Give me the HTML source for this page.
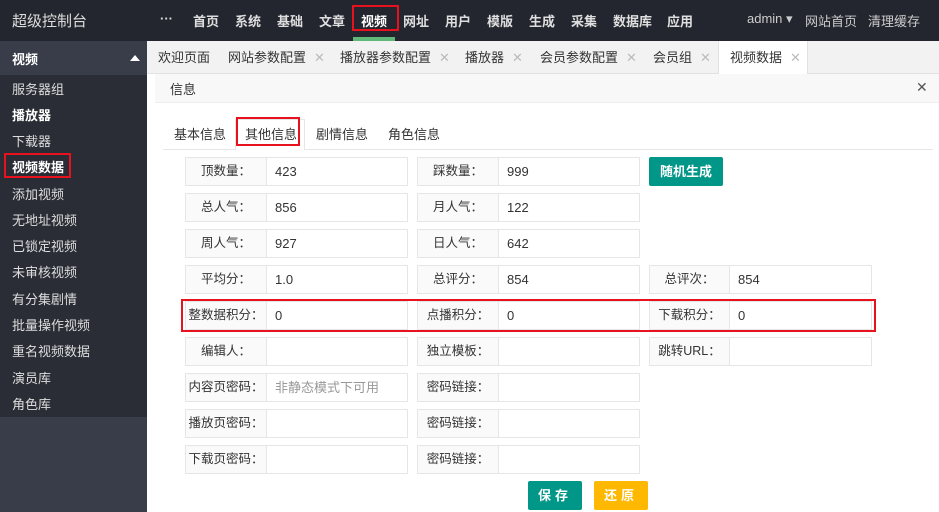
<!DOCTYPE html><html><head><meta charset="utf-8"><style>
*{margin:0;padding:0;box-sizing:border-box}
body{width:939px;height:512px;overflow:hidden;position:relative;background:#fff;font-family:"Liberation Sans","Noto Sans CJK SC",sans-serif;font-size:13px;color:#333}
.a{position:absolute;white-space:nowrap}
.top{left:0;top:0;width:939px;height:41px;background:#23262e}
.nav{top:11px;color:#fff;font-size:13px;font-weight:bold;opacity:.85}
.side{left:0;top:41px;width:147px;height:471px;background:#2a2d36}
.si{left:12px;color:#ddd;font-size:13px}
.lb{background:#fafafa;border:1px solid #e6e6e6;text-align:center;line-height:27px;height:29px;color:#333;font-size:12.5px}
.in{background:#fff;border:1px solid #e6e6e6;border-left:none;height:29px;line-height:27px;padding-left:8px;color:#333}
.red{border:2px solid #e8121e}
.tab{top:47px;color:#333}
.x{color:#bbb;margin-left:8px}
.btn{color:#fff;text-align:center;font-weight:bold;line-height:29px;height:29px;border-radius:2px}
</style></head><body>
<div class="a top"></div>
<div class="a" style="left:12px;top:10px;color:#ddd;font-size:15px">超级控制台</div>
<div class="a nav" style="left:160px">···</div>
<div class="a nav" style="left:193px">首页</div>
<div class="a nav" style="left:235px">系统</div>
<div class="a nav" style="left:277px">基础</div>
<div class="a nav" style="left:319px">文章</div>
<div class="a nav" style="left:361px;opacity:1">视频</div>
<div class="a red" style="left:352px;top:5px;width:47px;height:26px"></div>
<div class="a" style="left:353px;top:37px;width:42px;height:4px;background:#5fb878"></div>
<div class="a nav" style="left:403px">网址</div>
<div class="a nav" style="left:445px">用户</div>
<div class="a nav" style="left:487px">模版</div>
<div class="a nav" style="left:529px">生成</div>
<div class="a nav" style="left:571px">采集</div>
<div class="a nav" style="left:613px">数据库</div>
<div class="a nav" style="left:667px">应用</div>
<div class="a" style="left:747px;top:11px;color:#ccc">admin ▾</div>
<div class="a" style="left:805px;top:11px;color:#ccc">网站首页</div>
<div class="a" style="left:868px;top:11px;color:#ccc">清理缓存</div>

<div class="a side"></div>
<div class="a" style="left:0;top:41px;width:147px;height:34px;background:#393d49"></div>
<div class="a" style="left:12px;top:49px;color:#fff;font-weight:bold">视频</div>
<div class="a" style="left:130px;top:55px;width:0;height:0;border-left:5px solid transparent;border-right:5px solid transparent;border-bottom:6px solid #fff"></div>
<div class="a si" style="top:79px">服务器组</div>
<div class="a si" style="top:105px;color:#fff;font-weight:bold">播放器</div>
<div class="a si" style="top:131px">下载器</div>
<div class="a si" style="top:157px;color:#fff;font-weight:bold">视频数据</div>
<div class="a red" style="left:4px;top:153px;width:67px;height:25px"></div>
<div class="a si" style="top:184px">添加视频</div>
<div class="a si" style="top:210px">无地址视频</div>
<div class="a si" style="top:236px">已锁定视频</div>
<div class="a si" style="top:262px">未审核视频</div>
<div class="a si" style="top:289px">有分集剧情</div>
<div class="a si" style="top:315px">批量操作视频</div>
<div class="a si" style="top:341px">重名视频数据</div>
<div class="a si" style="top:368px">演员库</div>
<div class="a si" style="top:394px">角色库</div>
<div class="a" style="left:0;top:417px;width:147px;height:95px;background:#393d49"></div>

<div class="a" style="left:147px;top:41px;width:792px;height:33px;background:#f2f2f2;border-bottom:1px solid #e2e2e2"></div>
<div class="a" style="left:718px;top:41px;width:90px;height:33px;background:#fff;border-left:1px solid #e2e2e2;border-right:1px solid #e2e2e2"></div>
<div class="a tab" style="left:158px">欢迎页面</div>
<div class="a tab" style="left:228px">网站参数配置<span class="x">✕</span></div>
<div class="a tab" style="left:340px">播放器参数配置<span class="x">✕</span></div>
<div class="a tab" style="left:465px">播放器<span class="x">✕</span></div>
<div class="a tab" style="left:540px">会员参数配置<span class="x">✕</span></div>
<div class="a tab" style="left:653px">会员组<span class="x">✕</span></div>
<div class="a tab" style="left:730px">视频数据<span class="x">✕</span></div>

<div class="a" style="left:155px;top:74px;width:784px;height:29px;background:#f8f8f8;border-bottom:1px solid #eee"></div>
<div class="a" style="left:170px;top:79px">信息</div>
<div class="a" style="left:916px;top:79px;color:#555;font-size:14px">✕</div>

<div class="a" style="left:163px;top:149px;width:770px;height:1px;background:#e6e6e6"></div>
<div class="a" style="left:235px;top:119px;width:70px;height:31px;background:#fff;border:1px solid #e6e6e6;border-bottom:none"></div>
<div class="a" style="left:174px;top:124px">基本信息</div>
<div class="a" style="left:245px;top:124px">其他信息</div>
<div class="a" style="left:316px;top:124px">剧情信息</div>
<div class="a" style="left:388px;top:124px">角色信息</div>
<div class="a red" style="left:236px;top:117px;width:64px;height:29px"></div>

<div class="a lb" style="left:185px;top:157px;width:82px">顶数量：</div><div class="a in" style="left:267px;top:157px;width:141px">423</div>
<div class="a lb" style="left:417px;top:157px;width:82px">踩数量：</div><div class="a in" style="left:499px;top:157px;width:141px">999</div>
<div class="a btn" style="left:649px;top:157px;width:74px;background:#009688">随机生成</div>

<div class="a lb" style="left:185px;top:193px;width:82px">总人气：</div><div class="a in" style="left:267px;top:193px;width:141px">856</div>
<div class="a lb" style="left:417px;top:193px;width:82px">月人气：</div><div class="a in" style="left:499px;top:193px;width:141px">122</div>

<div class="a lb" style="left:185px;top:229px;width:82px">周人气：</div><div class="a in" style="left:267px;top:229px;width:141px">927</div>
<div class="a lb" style="left:417px;top:229px;width:82px">日人气：</div><div class="a in" style="left:499px;top:229px;width:141px">642</div>

<div class="a lb" style="left:185px;top:265px;width:82px">平均分：</div><div class="a in" style="left:267px;top:265px;width:141px">1.0</div>
<div class="a lb" style="left:417px;top:265px;width:82px">总评分：</div><div class="a in" style="left:499px;top:265px;width:141px">854</div>
<div class="a lb" style="left:649px;top:265px;width:81px">总评次：</div><div class="a in" style="left:730px;top:265px;width:142px">854</div>

<div class="a lb" style="left:185px;top:301px;width:82px">整数据积分：</div><div class="a in" style="left:267px;top:301px;width:141px">0</div>
<div class="a lb" style="left:417px;top:301px;width:82px">点播积分：</div><div class="a in" style="left:499px;top:301px;width:141px">0</div>
<div class="a lb" style="left:649px;top:301px;width:81px">下载积分：</div><div class="a in" style="left:730px;top:301px;width:142px">0</div>
<div class="a red" style="left:181px;top:299px;width:695px;height:33px"></div>

<div class="a lb" style="left:185px;top:337px;width:82px">编辑人：</div><div class="a in" style="left:267px;top:337px;width:141px"></div>
<div class="a lb" style="left:417px;top:337px;width:82px">独立模板：</div><div class="a in" style="left:499px;top:337px;width:141px"></div>
<div class="a lb" style="left:649px;top:337px;width:81px">跳转URL：</div><div class="a in" style="left:730px;top:337px;width:142px"></div>

<div class="a lb" style="left:185px;top:373px;width:82px">内容页密码：</div><div class="a in" style="left:267px;top:373px;width:141px;color:#999">非静态模式下可用</div>
<div class="a lb" style="left:417px;top:373px;width:82px">密码链接：</div><div class="a in" style="left:499px;top:373px;width:141px"></div>

<div class="a lb" style="left:185px;top:409px;width:82px">播放页密码：</div><div class="a in" style="left:267px;top:409px;width:141px"></div>
<div class="a lb" style="left:417px;top:409px;width:82px">密码链接：</div><div class="a in" style="left:499px;top:409px;width:141px"></div>

<div class="a lb" style="left:185px;top:445px;width:82px">下载页密码：</div><div class="a in" style="left:267px;top:445px;width:141px"></div>
<div class="a lb" style="left:417px;top:445px;width:82px">密码链接：</div><div class="a in" style="left:499px;top:445px;width:141px"></div>

<div class="a btn" style="left:528px;top:481px;width:54px;background:#009688;letter-spacing:4px">保存</div>
<div class="a btn" style="left:594px;top:481px;width:54px;background:#ffb800;letter-spacing:4px">还原</div>
</body></html>
